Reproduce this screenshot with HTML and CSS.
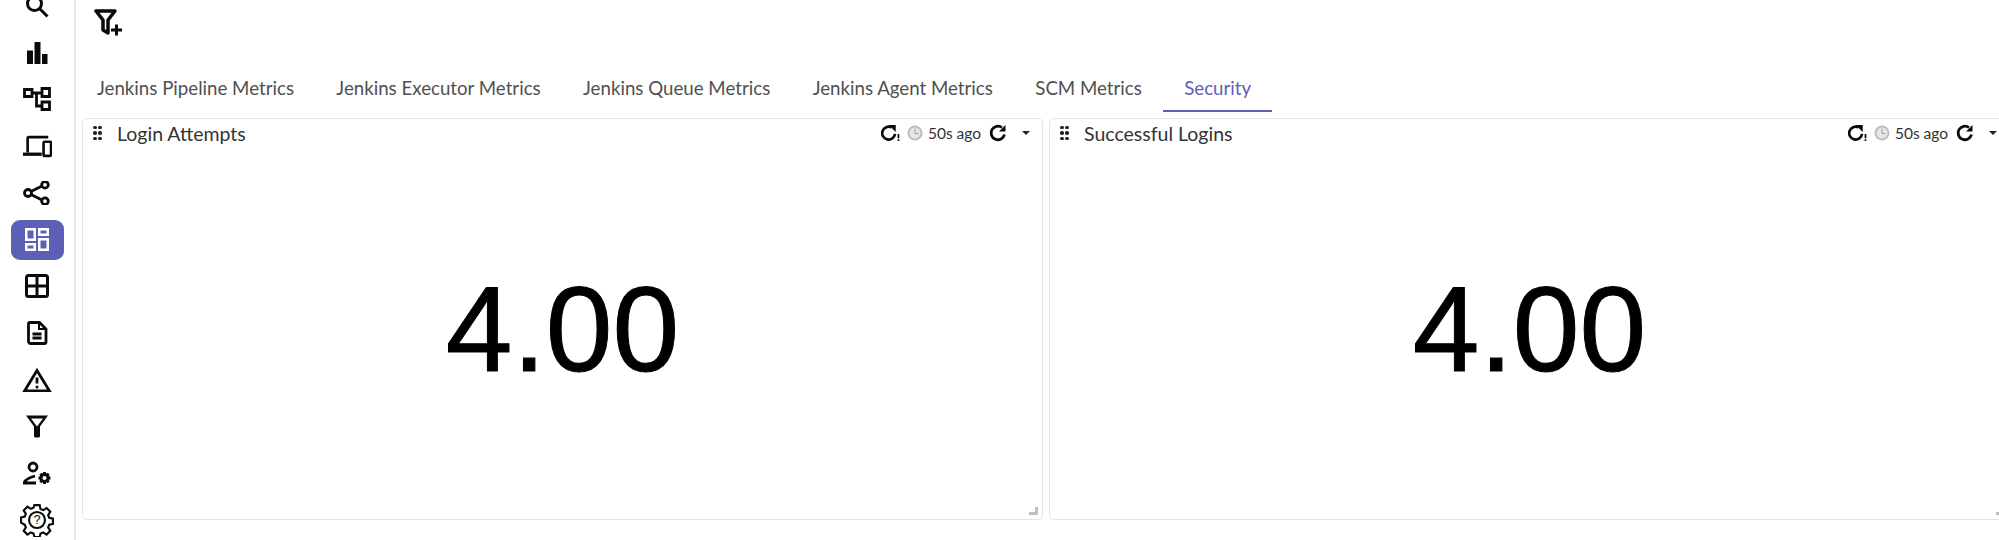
FILE: index.html
```html
<!DOCTYPE html>
<html lang="en">
<head>
<meta charset="utf-8">
<title>Security dashboard</title>
<link rel="stylesheet" href="styles.css">
</head>
<body>
<div class="app">
  <nav class="sidebar">
    <a class="nav-item"><svg class="ico" viewBox="0 0 24 24"><path class="ln" d="M15 15l7.500 7.500"/><circle class="ln" cx="9.500" cy="9.500" r="7"/></svg></a>
    <a class="nav-item"><svg class="ico" viewBox="0 0 24 24"><path class="fl" d="M2 9.500h6V23H2zM9.500 1h6v22h-6zM17 13h5.500v10H17z"/></svg></a>
    <a class="nav-item"><svg class="ico ico-wide" viewBox="0 0 30 24"><path class="ln mid" d="M2.500 2.500h7.500v7H2.500zM10 6h10M14.500 6v13H20M20 1.500h7.500v8H20zM20 15h7.500v7.500H20z"/></svg></a>
    <a class="nav-item"><svg class="ico ico-wide" viewBox="0 0 32 24"><path class="ln mid" d="M28 2.500H7.500A1.500 1.500 0 0 0 6 4v15"/><path class="fl" d="M1 19h20v3.500H1z"/><rect class="ln mid" x="23" y="7.500" width="8" height="15" rx="1"/></svg></a>
    <a class="nav-item"><svg class="ico ico-wide" viewBox="0 0 28 24"><circle class="ln mid" cx="5" cy="12" r="3.500"/><circle class="ln mid" cx="22" cy="3.800" r="3.300"/><circle class="ln mid" cx="22" cy="20.200" r="3.300"/><path class="ln mid" d="M8 10.500l11-5.500M8 13.500l11 5.500"/></svg></a>
    <a class="nav-item is-active"><span class="active-pill"><svg class="ico" viewBox="0 0 24 24"><path class="ln mid white" d="M1.250 1.250h8.500v10.500h-8.500zM1.250 16.250h8.500v5.500h-8.500zM14.250 1.250h8.500v5.500h-8.500zM14.250 11.250h8.500v10.500h-8.500z"/></svg></span></a>
    <a class="nav-item"><svg class="ico" viewBox="0 0 24 24"><rect class="ln" x="1.500" y="1.500" width="21" height="21" rx="2"/><path class="ln" d="M12 1.500v21M1.500 12h21"/></svg></a>
    <a class="nav-item"><svg class="ico" viewBox="0 0 24 24"><path class="ln mid" d="M5 1.500h9.500L21 8v13a1.500 1.500 0 0 1-1.500 1.500h-14A2 2 0 0 1 3.500 21V3A1.500 1.500 0 0 1 5 1.500zM7.500 13h9M7.500 17h9"/><path class="fl" d="M13 1.500h2V7h6v2h-8z"/></svg></a>
    <a class="nav-item"><svg class="ico ico-wide" viewBox="0 0 30 24"><path class="ln mid" d="M15 2.500L2.500 23h25zM15 9.500v6"/><circle class="fl" cx="15" cy="19" r="1.500"/></svg></a>
    <a class="nav-item"><svg class="ico" viewBox="0 0 24 24"><path class="fl" fill-rule="evenodd" d="M1 1.500h22l-8 11V22a1.500 1.500 0 0 1-1.500 1.500h-3A1.500 1.500 0 0 1 9 22v-9.500zM6 4.500l6 8 6-8z"/></svg></a>
    <a class="nav-item"><svg class="ico ico-wide" viewBox="0 0 30 24"><circle class="ln mid" cx="11" cy="6" r="4"/><path class="ln mid" d="M3 22v-2c2-2 6-4 10-5M1 22h13"/><path class="ln mid" d="M22.500 11v12M16.500 17h12M18.300 12.800l8.400 8.400M26.700 12.800l-8.400 8.400"/><circle class="ln mid hub" cx="22.500" cy="17" r="3.500"/></svg></a>
    <a class="nav-item"><svg class="ico ico-large" viewBox="0 0 32 32"><path class="ln thin" d="M13.500 2h5l.8 3.700 2.500 1 3.200-2 3.500 3.500-2 3.200 1 2.500 3.500.8v5l-3.500.8-1 2.500 2 3.200-3.500 3.500-3.200-2-2.500 1-.8 3.300h-5l-.8-3.300-2.500-1-3.200 2-3.500-3.500 2-3.200-1-2.500L1 18.500v-5l3.500-.8 1-2.500-2-3.200L7 3.500l3.200 2 2.500-1z"/><circle class="ln thin" cx="16" cy="16" r="7.500"/><text class="help" x="16" y="20">?</text></svg></a>
  </nav>
  <main class="content">
    <div class="toolbar">
      <svg class="filter-add" viewBox="0 0 30 28"><path class="ln heavy" d="M2 2h19l-7 9v13l-5-3V11z"/><path class="ln" d="M22.500 15.500v11M17 21h11"/></svg>
    </div>
    <div class="tabs">
      <span class="tab">Jenkins Pipeline Metrics</span>
      <span class="tab">Jenkins Executor Metrics</span>
      <span class="tab">Jenkins Queue Metrics</span>
      <span class="tab">Jenkins Agent Metrics</span>
      <span class="tab">SCM Metrics</span>
      <span class="tab tab-active">Security</span>
    </div>
    <div class="grid">
      <section class="panel">
        <header class="panel-head">
          <span class="dots"><i></i><i></i><i></i><i></i><i></i><i></i></span>
          <span class="panel-title">Login Attempts</span>
          <span class="panel-tools">
            <svg class="tool" viewBox="0 0 20 18"><path class="ln tool-ln" d="M11 3a6.800 6.800 0 1 0 3.800 7"/><path class="fl" d="M8 .500h7.500V8z"/><path class="fl" d="M17.500 10h1.800v4.500h-1.800zM17.500 15.500h1.800V17.500h-1.800z"/></svg>
            <svg class="clock" viewBox="0 0 16 16"><circle cx="8" cy="8" r="7.500" fill="#bdbdbd"/><circle cx="8" cy="8" r="5.500" fill="#e6e6e6"/><path d="M8 3.500v5h3.500" fill="none" stroke="#a0a0a0"/></svg>
            <span class="ago">50s ago</span>
            <svg class="tool refresh" viewBox="0 0 18 18"><path class="ln tool-ln" d="M13.500 3.500a6.800 6.800 0 1 0 2.500 7"/><path class="fl" d="M10.500 7.500H17V1z"/></svg>
            <span class="caret"></span>
          </span>
        </header>
        <div class="panel-body">4.00</div>
        <span class="resize"></span>
      </section>
      <section class="panel">
        <header class="panel-head">
          <span class="dots"><i></i><i></i><i></i><i></i><i></i><i></i></span>
          <span class="panel-title">Successful Logins</span>
          <span class="panel-tools">
            <svg class="tool" viewBox="0 0 20 18"><path class="ln tool-ln" d="M11 3a6.800 6.800 0 1 0 3.800 7"/><path class="fl" d="M8 .500h7.500V8z"/><path class="fl" d="M17.500 10h1.800v4.500h-1.800zM17.500 15.500h1.800V17.500h-1.800z"/></svg>
            <svg class="clock" viewBox="0 0 16 16"><circle cx="8" cy="8" r="7.500" fill="#bdbdbd"/><circle cx="8" cy="8" r="5.500" fill="#e6e6e6"/><path d="M8 3.500v5h3.500" fill="none" stroke="#a0a0a0"/></svg>
            <span class="ago">50s ago</span>
            <svg class="tool refresh" viewBox="0 0 18 18"><path class="ln tool-ln" d="M13.500 3.500a6.800 6.800 0 1 0 2.500 7"/><path class="fl" d="M10.500 7.500H17V1z"/></svg>
            <span class="caret"></span>
          </span>
        </header>
        <div class="panel-body">4.00</div>
        <span class="resize"></span>
      </section>
    </div>
  </main>
</div>
</body>
</html>
```

FILE: styles.css
```css
html, body {
  margin: 0;
  padding: 0;
  height: 100%;
  overflow: hidden;
  background: #fff;
}
body {
  font-family: "Lato", "Noto Sans", sans-serif;
  color: #333;
}
.app {
  display: flex;
  height: 540px;
  width: 1999px;
  overflow: hidden;
}
.sidebar {
  flex: 0 0 76px;
  box-sizing: border-box;
  height: 543px;
  border-right: 2px solid #e9e9e9;
  display: flex;
  flex-direction: column;
  justify-content: flex-end;
  align-items: center;
}
.nav-item {
  flex: 0 0 46.700px;
  display: flex;
  align-items: center;
  justify-content: center;
  width: 100%;
}
.ico {
  width: 24px;
  height: 24px;
  display: block;
}
.ico-wide {
  width: 30px;
  height: 24px;
}
.ico-large {
  width: 34px;
  height: 34px;
}
.ln {
  fill: none;
  stroke: #0a0a0a;
  stroke-width: 3;
}
.mid {
  stroke-width: 2.800;
}
.heavy {
  stroke-width: 3.500;
  stroke-linejoin: round;
}
.thin {
  stroke-width: 2;
}
.white {
  stroke: #fff;
  stroke-width: 2.500;
}
.hub {
  fill: #fff;
}
.fl {
  fill: #0a0a0a;
}
.help {
  font-family: "Liberation Sans", sans-serif;
  font-size: 12px;
  text-anchor: middle;
  fill: #0a0a0a;
}
.active-pill {
  width: 53px;
  height: 40px;
  border-radius: 9px;
  background: #5b60b5;
  display: flex;
  align-items: center;
  justify-content: center;
}
.content {
  flex: 1;
  min-width: 0;
  padding-left: 6px;
}
.toolbar {
  height: 46px;
  display: flex;
  align-items: center;
  padding-left: 12px;
}
.filter-add {
  width: 30px;
  height: 28px;
  display: block;
}
.tabs {
  display: flex;
  height: 72px;
  box-sizing: border-box;
  padding-top: 30px;
  margin-left: -6.200px;
}
.tab {
  padding: 0 21.200px;
  font-size: 18.700px;
  line-height: 24px;
  color: #4f4f4f;
  height: 36px;
  box-sizing: border-box;
  white-space: nowrap;
}
.tab-active {
  color: #5b60b5;
  border-bottom: 2px solid #5b60b5;
}
.grid {
  display: flex;
  gap: 6px;
  width: 2100px;
}
.panel {
  position: relative;
  box-sizing: border-box;
  flex: 0 0 961px;
  height: 402px;
  border: 1.500px solid #e4e4e4;
  border-radius: 5px;
  display: flex;
  flex-direction: column;
}
.panel-head {
  display: flex;
  align-items: center;
  height: 28px;
  padding: 0 12px 0 10px;
}
.dots {
  display: grid;
  grid-template-columns: 3px 3px;
  gap: 2px;
  margin-right: 16px;
}
.dots i {
  width: 3.500px;
  height: 3.500px;
  background: #222;
  border-radius: 50%;
}
.panel-title {
  font-size: 19.500px;
  color: #333;
  white-space: nowrap;
}
.panel-tools {
  margin-left: auto;
  display: flex;
  align-items: center;
  font-size: 15.500px;
  color: #333;
}
.tool {
  width: 19px;
  height: 18px;
  display: block;
}
.tool-ln {
  stroke-width: 2.800;
}
.clock {
  width: 16px;
  height: 16px;
  margin: 0 5px 0 7px;
}
.refresh {
  margin-left: 7px;
  width: 19px;
}
.caret {
  margin-left: 15px;
  width: 0;
  height: 0;
  border-left: 4px solid transparent;
  border-right: 4px solid transparent;
  border-top: 4px solid #222;
}
.panel-body {
  flex: 1;
  display: flex;
  align-items: center;
  justify-content: center;
  font-family: "Liberation Sans", sans-serif;
  font-size: 120px;
  -webkit-text-stroke: 1px #000;
  color: #000;
  padding-bottom: 8px;
}
.resize {
  position: absolute;
  right: 4px;
  bottom: 4px;
  width: 6px;
  height: 5px;
  border-right: 3px solid #c0c0c0;
  border-bottom: 3px solid #c0c0c0;
}
```
